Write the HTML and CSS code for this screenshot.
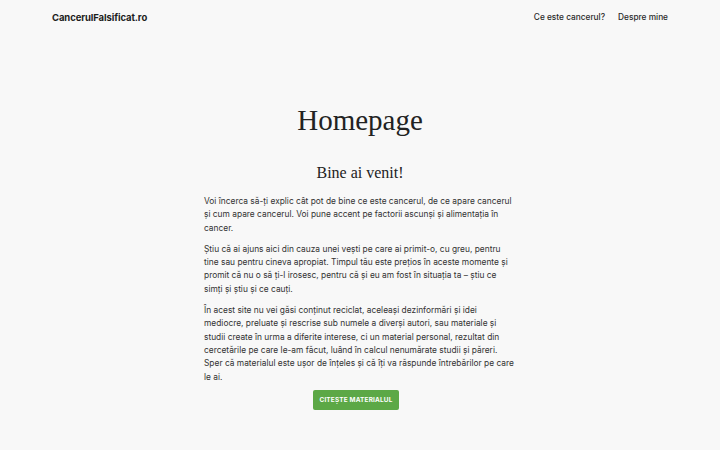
FILE: index.html
```html
<!DOCTYPE html>
<html lang="ro">
<head>
<meta charset="utf-8">
<title>Homepage – CancerulFalsificat.ro</title>
<link rel="stylesheet" href="styles.css">
</head>
<body>
<header class="site-header">
  <a class="logo" href="#">CancerulFalsificat.ro</a>
  <nav class="nav">
    <a href="#">Ce este cancerul?</a>
    <a href="#">Despre mine</a>
  </nav>
</header>
<main class="content">
  <h1 class="page-title">Homepage</h1>
  <h2 class="welcome">Bine ai venit!</h2>
  <div class="text">
    <p>Voi încerca să-ți explic cât pot de bine ce este cancerul, de ce apare cancerul și cum apare cancerul. Voi pune accent pe factorii ascunși și alimentația în cancer.</p>
    <p>Știu că ai ajuns aici din cauza unei vești pe care ai primit-o, cu greu, pentru tine sau pentru cineva apropiat. Timpul tău este prețios în aceste momente și promit că nu o să ți-l irosesc, pentru că și eu am fost în situația ta – știu ce simți și știu și ce cauți.</p>
    <p>În acest site nu vei găsi conținut reciclat, aceleași dezinformări și idei mediocre, preluate și rescrise sub numele a diverși autori, sau materiale și studii create în urma a diferite interese, ci un material personal, rezultat din cercetările pe care le-am făcut, luând în calcul nenumărate studii și păreri. Sper că materialul este ușor de înțeles și că îți va răspunde întrebărilor pe care le ai.</p>
  </div>
  <a class="btn" href="#">Citește materialul</a>
</main>
</body>
</html>
```

FILE: styles.css
```css
* { box-sizing: border-box; }

html, body {
  margin: 0;
  background: #f8f8f8;
}

body {
  font-family: Inter, "Noto Sans", sans-serif;
  color: #2b2b2b;
}

a { text-decoration: none; color: inherit; }

.site-header {
  display: flex;
  justify-content: space-between;
  align-items: center;
  height: 34px;
  padding: 0 52px;
}

.logo {
  font-size: 9.5px;
  font-weight: 700;
  color: #1d1d1d;
  letter-spacing: -0.1px;
}

.nav {
  display: flex;
  gap: 13px;
}

.nav a {
  font-size: 8.3px;
  font-weight: 500;
  color: #2a2a2a;
}

.content {
  display: flex;
  flex-direction: column;
  align-items: center;
  padding-top: 67px;
}

.page-title {
  margin: 0;
  font-family: "Liberation Serif", serif;
  font-weight: 400;
  font-size: 29px;
  line-height: 38px;
  color: #222;
}

.welcome {
  margin: 23px 0 0;
  font-family: "Liberation Serif", serif;
  font-weight: 400;
  font-size: 16px;
  line-height: 22px;
  color: #222;
}

.text {
  width: 312px;
  margin-top: 11px;
  font-size: 8.4px;
  line-height: 13.3px;
  color: #333;
}

.text p {
  margin: 0 0 8px;
}

/* call-to-action sits a little left of the column's centre */
.btn {
  margin: -2px 8px 0 0;
  display: flex;
  align-items: center;
  justify-content: center;
  width: 86px;
  height: 20px;
  border-radius: 2px;
  background: #5ca846;
  color: #fff;
  font-size: 6.4px;
  font-weight: 700;
  text-transform: uppercase;
  letter-spacing: 0.2px;
}
```
